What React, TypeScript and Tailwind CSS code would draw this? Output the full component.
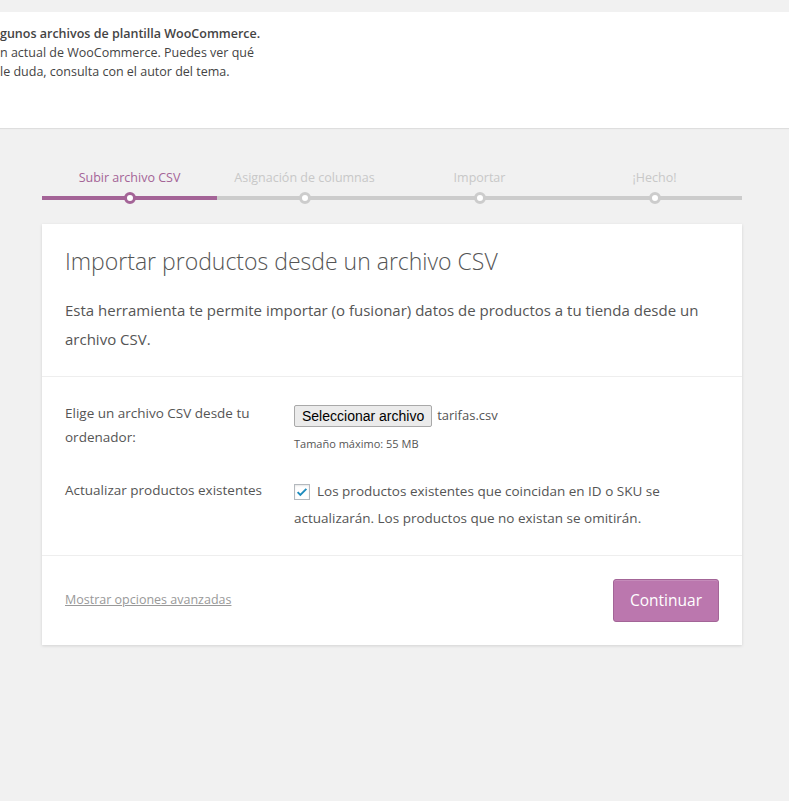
import React, { useState } from "react";

const steps = ["Subir archivo CSV", "Asignación de columnas", "Importar", "¡Hecho!"];

const App: React.FC = () => {
  const [update, setUpdate] = useState(true);

  return (
    <div className="min-h-[801px] w-full overflow-hidden bg-[#f1f1f1] pt-3 font-['Open_Sans',sans-serif] text-[#444]">
      {/* aviso de plantillas (recortado por la izquierda) */}
      <div className="h-[116px] bg-white pt-[12px] shadow-[0_1px_1px_rgba(0,0,0,0.08)] text-[12.5px] leading-[19px] text-[#444]">
        <p className="font-semibold">gunos archivos de plantilla WooCommerce.</p>
        <p>n actual de WooCommerce. Puedes ver qué</p>
        <p>le duda, consulta con el autor del tema.</p>
      </div>

      {/* pasos */}
      <div className="ml-[42px] mr-[47px] mt-[41px]">
        <div className="grid grid-cols-4">
          {steps.map((s, i) => (
            <div key={s} className="flex flex-col items-center">
              <span className={`text-[12.5px] leading-[18px] ${i === 0 ? "text-[#a46497]" : "text-[#c8c8c8]"}`}>
                {s}
              </span>
              <div className="relative mt-[5px] flex h-[12px] w-full items-center justify-center">
                <div className={`absolute inset-x-0 top-[4px] h-[4px] ${i === 0 ? "bg-[#a46497]" : "bg-[#cccccc]"}`} />
                <div
                  className={`relative h-[12px] w-[12px] rounded-full border-[3px] bg-white ${
                    i === 0 ? "border-[#a46497]" : "border-[#cccccc]"
                  }`}
                />
              </div>
            </div>
          ))}
        </div>
      </div>

      {/* tarjeta */}
      <div className="ml-[42px] mr-[47px] mt-[20px] bg-white shadow-[0_1px_3px_rgba(0,0,0,0.13)]">
        <header className="border-b border-[#eee] px-[23px] pb-[22px] pt-[21px]">
          <h2 className="text-[23px] font-light leading-[32px] text-[#555]">
            Importar productos desde un archivo CSV
          </h2>
          <p className="mt-[19px] text-[15px] leading-[29px] text-[#555]">
            Esta herramienta te permite importar (o fusionar) datos de productos a tu tienda desde un archivo CSV.
          </p>
        </header>

        <section className="border-b border-[#eee] px-[23px] pb-[23px] pt-[24px] text-[13.5px] text-[#555]">
          <div className="flex">
            <label className="w-[229px] shrink-0 leading-[24px]">
              Elige un archivo CSV desde tu
              <br />
              ordenador:
            </label>
            <div className="pt-[4px]">
              <div className="flex items-center">
                <button className="h-[22px] rounded-[2px] border border-[#a9a9a9] bg-[#ebebeb] px-[7px] font-['Liberation_Sans',sans-serif] text-[14px] leading-[20px] text-black">
                  Seleccionar archivo
                </button>
                <span className="ml-[5px] text-[13px]">tarifas.csv</span>
              </div>
              <p className="mt-[9px] text-[11px] leading-[16px]">Tamaño máximo: 55 MB</p>
            </div>
          </div>

          <div className="mt-[26px] flex">
            <label className="w-[229px] shrink-0 leading-[24px]">Actualizar productos existentes</label>
            <div className="leading-[27px]">
              <label className="cursor-pointer">
                <span
                  onClick={() => setUpdate(!update)}
                  className="mr-[7px] inline-flex h-[16px] w-[16px] translate-y-[3px] items-center justify-center border border-[#b4b9be] bg-white shadow-[inset_0_1px_2px_rgba(0,0,0,0.1)]"
                >
                  {update && (
                    <svg viewBox="0 0 16 16" className="h-[14px] w-[14px]">
                      <path d="M3 8.2l3.1 3.1L13 4.4" fill="none" stroke="#1e8cbe" strokeWidth="2.2" />
                    </svg>
                  )}
                </span>
                Los productos existentes que coincidan en ID o SKU se actualizarán. Los productos que no existan se
                omitirán.
              </label>
            </div>
          </div>
        </section>

        <footer className="flex items-center justify-between px-[23px] pb-[23px] pt-[23px]">
          <a href="#" className="text-[12.5px] text-[#999] underline">
            Mostrar opciones avanzadas
          </a>
          <button className="h-[43px] rounded-[3px] border border-[#a36597] bg-[#bb77ae] px-[16px] text-[15.5px] text-white shadow-[inset_0_1px_0_rgba(255,255,255,0.15)]">
            Continuar
          </button>
        </footer>
      </div>
    </div>
  );
};

export default App;
